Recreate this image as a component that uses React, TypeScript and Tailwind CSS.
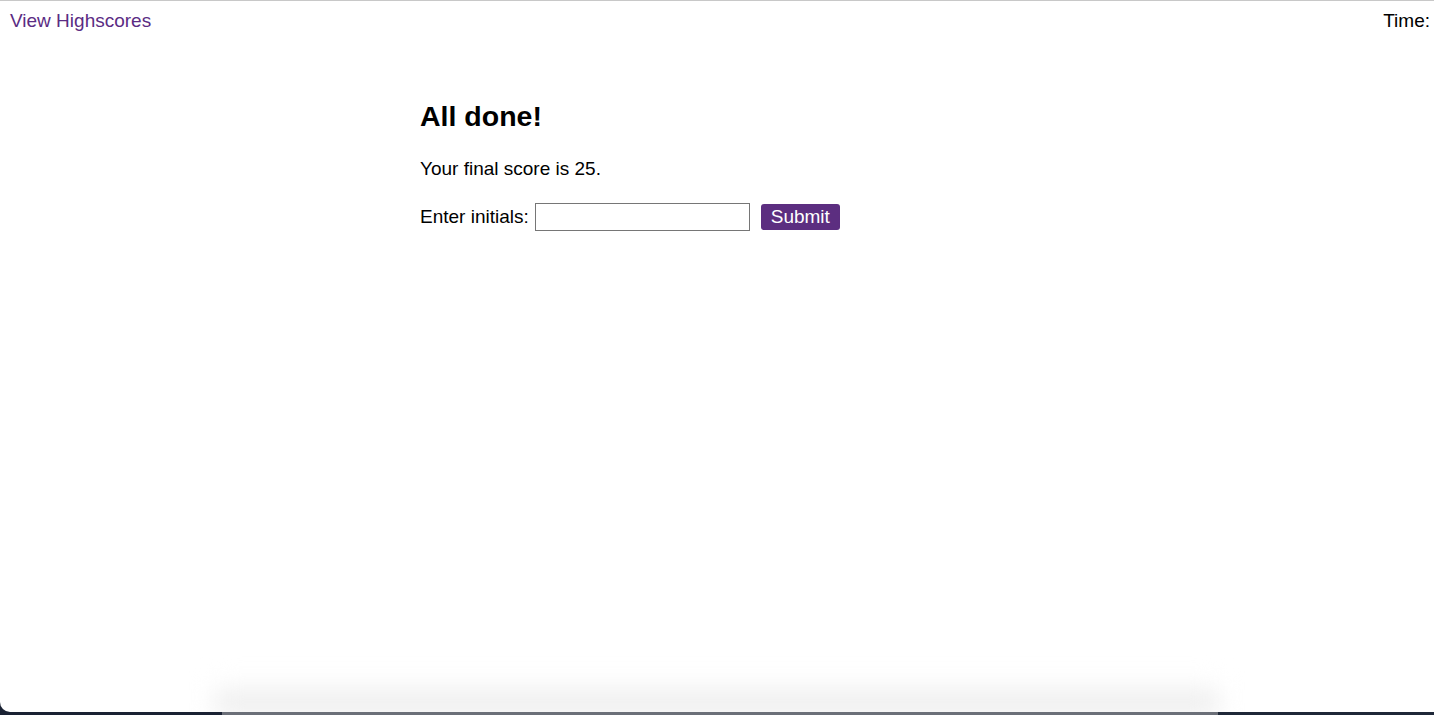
export default function App() {
  return (
    <div
      className="flex h-[715px] w-full flex-col overflow-hidden bg-[#1a2233]"
      style={{ fontFamily: '"Liberation Sans", Arial, sans-serif' }}
    >
      <div className="flex flex-1 flex-col overflow-hidden rounded-bl-[10px] border-t border-[#c8c8c8] bg-white">
        <header className="flex items-start justify-between pl-[10px] pr-[4px] pt-[9px]">
          <a href="#" className="text-[19px] leading-[22px] text-[#5b2c83]">
            View Highscores
          </a>
          <div className="text-[19px] leading-[22px] text-black">Time:</div>
        </header>

        <main className="ml-[420px] flex flex-col pt-[67px] text-black">
          <h2 className="text-[28.5px] font-bold leading-[34px]">All done!</h2>
          <p className="mt-[25px] text-[19px] leading-[22px]">Your final score is 25.</p>
          <form className="mt-[23px] flex items-center text-[19px] leading-[22px]">
            <label htmlFor="initials">Enter initials:</label>
            <input
              id="initials"
              type="text"
              className="ml-[6px] h-[28px] w-[215px] border border-[#767676] bg-white px-1 outline-none"
            />
            <button
              type="submit"
              className="ml-[11px] h-[26px] w-[79px] rounded-[3px] bg-[#5c2e80] text-[19px] leading-[22px] text-white"
            >
              Submit
            </button>
          </form>
        </main>

        <div className="flex-1" />
        <div className="mx-[215px] h-[30px] bg-gradient-to-b from-white to-[#e2e2e2] blur-[12px]" />
      </div>
      <div className="flex h-[3px] shrink-0">
        <div className="w-[222px] bg-[#1a2233]" />
        <div className="flex-1 bg-[#6b6f78]" />
        <div className="w-[216px] bg-[#1f2838]" />
      </div>
    </div>
  );
}
